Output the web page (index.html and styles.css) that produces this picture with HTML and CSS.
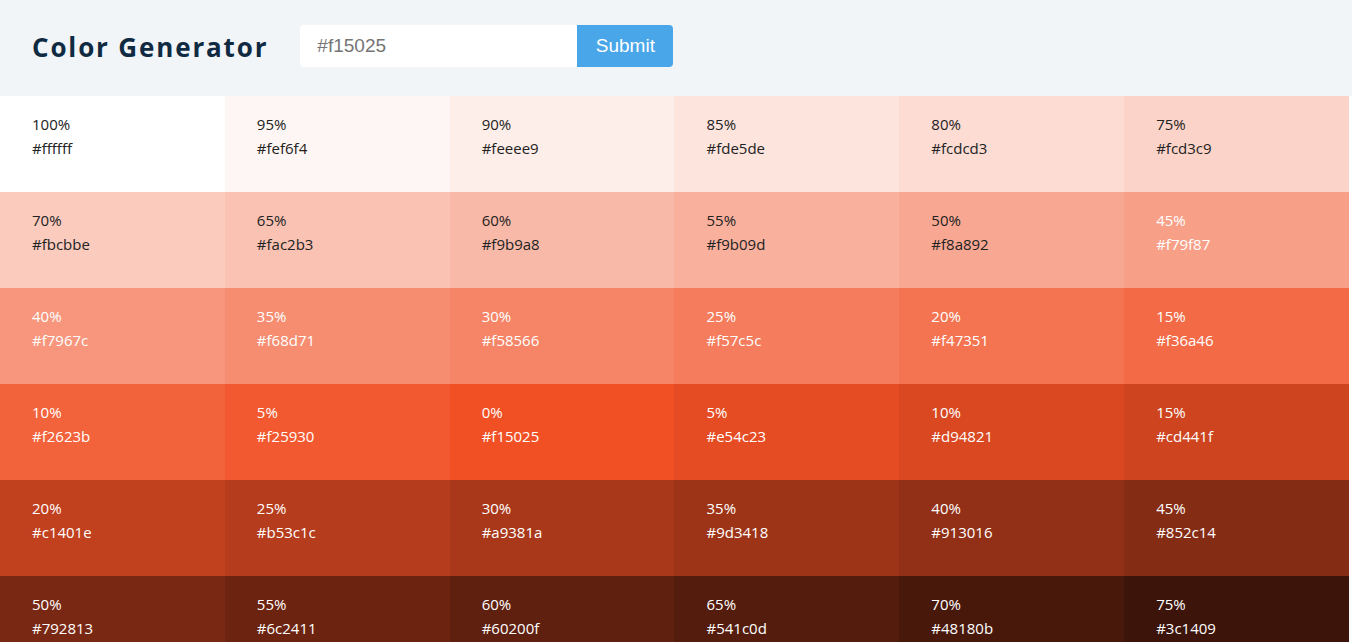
FILE: index.html
```html
<!DOCTYPE html>
<html lang="en">
<head>
<meta charset="utf-8">
<title>Color Generator</title>
<link rel="stylesheet" href="styles.css">
</head>
<body>
<section class="container">
  <h3 class="title">Color Generator</h3>
  <form class="form">
    <input type="text" class="input" placeholder="#f15025">
    <button type="submit" class="btn">Submit</button>
  </form>
</section>
<section class="colors">
  <article class="color"><p class="percent">100%</p><p class="hex">#ffffff</p></article>
  <article class="color"><p class="percent">95%</p><p class="hex">#fef6f4</p></article>
  <article class="color"><p class="percent">90%</p><p class="hex">#feeee9</p></article>
  <article class="color"><p class="percent">85%</p><p class="hex">#fde5de</p></article>
  <article class="color"><p class="percent">80%</p><p class="hex">#fcdcd3</p></article>
  <article class="color"><p class="percent">75%</p><p class="hex">#fcd3c9</p></article>
  <article class="color"><p class="percent">70%</p><p class="hex">#fbcbbe</p></article>
  <article class="color"><p class="percent">65%</p><p class="hex">#fac2b3</p></article>
  <article class="color"><p class="percent">60%</p><p class="hex">#f9b9a8</p></article>
  <article class="color"><p class="percent">55%</p><p class="hex">#f9b09d</p></article>
  <article class="color"><p class="percent">50%</p><p class="hex">#f8a892</p></article>
  <article class="color light"><p class="percent">45%</p><p class="hex">#f79f87</p></article>
  <article class="color light"><p class="percent">40%</p><p class="hex">#f7967c</p></article>
  <article class="color light"><p class="percent">35%</p><p class="hex">#f68d71</p></article>
  <article class="color light"><p class="percent">30%</p><p class="hex">#f58566</p></article>
  <article class="color light"><p class="percent">25%</p><p class="hex">#f57c5c</p></article>
  <article class="color light"><p class="percent">20%</p><p class="hex">#f47351</p></article>
  <article class="color light"><p class="percent">15%</p><p class="hex">#f36a46</p></article>
  <article class="color light"><p class="percent">10%</p><p class="hex">#f2623b</p></article>
  <article class="color light"><p class="percent">5%</p><p class="hex">#f25930</p></article>
  <article class="color light"><p class="percent">0%</p><p class="hex">#f15025</p></article>
  <article class="color light"><p class="percent">5%</p><p class="hex">#e54c23</p></article>
  <article class="color light"><p class="percent">10%</p><p class="hex">#d94821</p></article>
  <article class="color light"><p class="percent">15%</p><p class="hex">#cd441f</p></article>
  <article class="color light"><p class="percent">20%</p><p class="hex">#c1401e</p></article>
  <article class="color light"><p class="percent">25%</p><p class="hex">#b53c1c</p></article>
  <article class="color light"><p class="percent">30%</p><p class="hex">#a9381a</p></article>
  <article class="color light"><p class="percent">35%</p><p class="hex">#9d3418</p></article>
  <article class="color light"><p class="percent">40%</p><p class="hex">#913016</p></article>
  <article class="color light"><p class="percent">45%</p><p class="hex">#852c14</p></article>
  <article class="color light"><p class="percent">50%</p><p class="hex">#792813</p></article>
  <article class="color light"><p class="percent">55%</p><p class="hex">#6c2411</p></article>
  <article class="color light"><p class="percent">60%</p><p class="hex">#60200f</p></article>
  <article class="color light"><p class="percent">65%</p><p class="hex">#541c0d</p></article>
  <article class="color light"><p class="percent">70%</p><p class="hex">#48180b</p></article>
  <article class="color light"><p class="percent">75%</p><p class="hex">#3c1409</p></article>
  <article class="color light"><p class="percent">80%</p><p class="hex">#301007</p></article>
  <article class="color light"><p class="percent">85%</p><p class="hex">#240c06</p></article>
  <article class="color light"><p class="percent">90%</p><p class="hex">#180804</p></article>
  <article class="color light"><p class="percent">95%</p><p class="hex">#0c0402</p></article>
  <article class="color light"><p class="percent">100%</p><p class="hex">#000000</p></article>
</section>
</body>
</html>
```

FILE: styles.css
```css
* {
  margin: 0;
  padding: 0;
  box-sizing: border-box;
}

body {
  font-family: "Open Sans", "Noto Sans", sans-serif;
  background: #ffffff;
  color: #102a42;
  overflow: hidden;
}

.container {
  display: flex;
  align-items: center;
  height: 96px;
  padding: 0 32px;
  background: #f1f5f8;
}

.title {
  font-size: 26px;
  font-weight: 700;
  letter-spacing: 1.85px;
  color: #102a42;
  margin-right: 32px;
  margin-top: -2px;
}

.form {
  display: flex;
  margin-top: -5px;
}

.input {
  width: 277px;
  height: 42px;
  border: none;
  border-radius: 4px 0 0 4px;
  padding: 0 17px;
  font-family: "Liberation Sans", Arial, sans-serif;
  font-size: 19px;
  background: #ffffff;
  outline: none;
}

.input::placeholder {
  color: #757575;
}

.btn {
  width: 96px;
  height: 42px;
  border: none;
  border-radius: 0 4px 4px 0;
  background: #49a6e9;
  color: #ffffff;
  font-family: "Liberation Sans", Arial, sans-serif;
  font-size: 19px;
  cursor: pointer;
}

.colors {
  display: grid;
  grid-template-columns: repeat(6, 224.83px);
}

.color {
  height: 96px;
  padding: 16px 32px;
  font-size: 15px;
  line-height: 24px;
  color: #222222;
}

.color.light {
  color: #ffffff;
}

.colors .color:nth-child(1) { background: #ffffff; }
.colors .color:nth-child(2) { background: #fef6f4; }
.colors .color:nth-child(3) { background: #feeee9; }
.colors .color:nth-child(4) { background: #fde5de; }
.colors .color:nth-child(5) { background: #fcdcd3; }
.colors .color:nth-child(6) { background: #fcd3c9; }
.colors .color:nth-child(7) { background: #fbcbbe; }
.colors .color:nth-child(8) { background: #fac2b3; }
.colors .color:nth-child(9) { background: #f9b9a8; }
.colors .color:nth-child(10) { background: #f9b09d; }
.colors .color:nth-child(11) { background: #f8a892; }
.colors .color:nth-child(12) { background: #f79f87; }
.colors .color:nth-child(13) { background: #f7967c; }
.colors .color:nth-child(14) { background: #f68d71; }
.colors .color:nth-child(15) { background: #f58566; }
.colors .color:nth-child(16) { background: #f57c5c; }
.colors .color:nth-child(17) { background: #f47351; }
.colors .color:nth-child(18) { background: #f36a46; }
.colors .color:nth-child(19) { background: #f2623b; }
.colors .color:nth-child(20) { background: #f25930; }
.colors .color:nth-child(21) { background: #f15025; }
.colors .color:nth-child(22) { background: #e54c23; }
.colors .color:nth-child(23) { background: #d94821; }
.colors .color:nth-child(24) { background: #cd441f; }
.colors .color:nth-child(25) { background: #c1401e; }
.colors .color:nth-child(26) { background: #b53c1c; }
.colors .color:nth-child(27) { background: #a9381a; }
.colors .color:nth-child(28) { background: #9d3418; }
.colors .color:nth-child(29) { background: #913016; }
.colors .color:nth-child(30) { background: #852c14; }
.colors .color:nth-child(31) { background: #792813; }
.colors .color:nth-child(32) { background: #6c2411; }
.colors .color:nth-child(33) { background: #60200f; }
.colors .color:nth-child(34) { background: #541c0d; }
.colors .color:nth-child(35) { background: #48180b; }
.colors .color:nth-child(36) { background: #3c1409; }
.colors .color:nth-child(37) { background: #301007; }
.colors .color:nth-child(38) { background: #240c06; }
.colors .color:nth-child(39) { background: #180804; }
.colors .color:nth-child(40) { background: #0c0402; }
.colors .color:nth-child(41) { background: #000000; }
```
